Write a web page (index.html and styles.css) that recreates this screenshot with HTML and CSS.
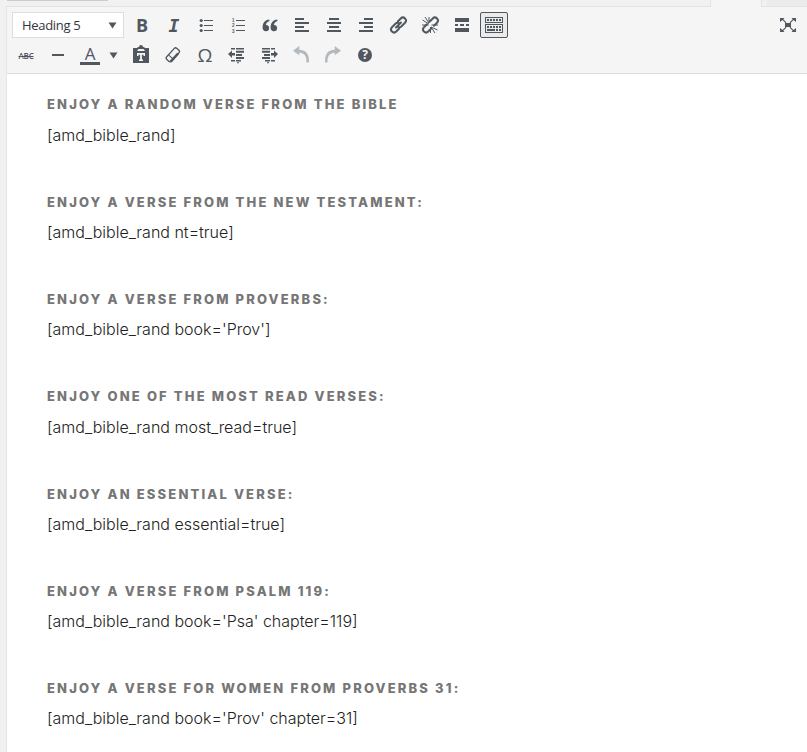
FILE: index.html
```html
<!DOCTYPE html>
<html lang="en">
<head>
<meta charset="utf-8">
<title>Editor</title>
<link rel="stylesheet" href="styles.css">
</head>
<body>
<div class="tabs"><div class="tabs-left"><i class="line"></i></div><div class="tab-active"></div><div class="tab-edge"></div><div class="tab-text"></div></div>
<main class="editor">
<div class="toolbar">
  <div class="row">
    <div class="select"><span>Heading 5</span><svg width="9" height="7" viewBox="0 0 9 7"><path d="M.5.5h8L4.500 6.500z"/></svg></div>
    <b class="btn bold">B</b>
    <b class="btn italic">I</b>
    <span class="btn"><svg viewBox="0 0 20 20"><circle cx="5.200" cy="5.500" r="1.600"/><circle cx="5.200" cy="10.500" r="1.600"/><circle cx="5.200" cy="15.500" r="1.600"/><path d="M8 5h9v1H8zM8 10h9v1H8zM8 15h9v1H8z"/></svg></span>
    <span class="btn"><svg viewBox="0 0 20 20"><g class="nums"><text x="4" y="7">1</text><text x="4" y="12.300">2</text><text x="4" y="17.600">3</text></g><path d="M8 5h9v1H8zM8 10h9v1H8zM8 15h9v1H8z"/></svg></span>
    <span class="btn"><svg viewBox="0 0 20 20"><path d="M9.200 4.500C5 5 2.600 8 2.600 12.500c0 2.300 1.200 3.700 3.200 3.700a3.200 3.200 0 0 0 3.300-3.200c0-1.900-1.300-3.100-3.200-3 .2-1.800 1.400-3.300 3.600-4zM17.200 4.500c-4.200.5-6.600 3.500-6.600 8 0 2.300 1.200 3.700 3.200 3.700a3.200 3.200 0 0 0 3.300-3.200c0-1.900-1.300-3.100-3.200-3 .2-1.800 1.400-3.300 3.600-4z"/></svg></span>
    <span class="btn"><svg viewBox="0 0 20 20"><path d="M3 3h9v2H3zM3 7h14v2H3zM3 11h9v2H3zM3 15h14v2H3z"/></svg></span>
    <span class="btn"><svg viewBox="0 0 20 20"><path d="M5 3h10v2H5zM3 7h14v2H3zM5 11h10v2H5zM3 15h14v2H3z"/></svg></span>
    <span class="btn"><svg viewBox="0 0 20 20"><path d="M8 3h9v2H8zM3 7h14v2H3zM8 11h9v2H8zM3 15h14v2H3z"/></svg></span>
    <span class="btn"><svg viewBox="0 0 20 20"><g class="chain" transform="translate(.5 0) rotate(-45 10 10)"><path d="M8 13H3.800a3 3 0 0 1 0-6H9a3 3 0 0 1 2.700 2M12 7h4.200a3 3 0 0 1 0 6H11a3 3 0 0 1-2.700-2"/><path d="M6.500 10h7"/></g></svg></span>
    <span class="btn"><svg viewBox="0 0 20 20"><g class="chain" transform="translate(.5 0) rotate(-45 10 10)"><path d="M8 13H3.800a3 3 0 0 1 0-6H8M12 7h4.200a3 3 0 0 1 0 6H12"/></g><path class="thin" d="M9 9 2.500 5M9 8 5 2M9 8V2M11 12l6.500 3M11 12l4 6M10.500 12v6M8.500 10H2M11.500 10H18"/></svg></span>
    <span class="btn"><svg viewBox="0 0 20 20"><path d="M3 3h14v4H3zM3 9h3v2H3zM8 9h4v2H8zM14 9h3v2h-3zM3 13h14v4H3z"/></svg></span>
    <span class="btn on"><svg viewBox="0 0 20 20"><path fill-rule="evenodd" d="M1 2h18v6H1zM2 3v4h16V3zM1 9h18v9H1zM2 10v7h16v-7z"/><path d="M3 4h2v2H3zM6 4h2v2H6zM9 4h2v2H9zM12 4h2v2h-2zM15 4h2v2h-2zM3 11h2v2H3zM6 11h2v2H6zM9 11h2v2H9zM12 11h2v2h-2zM15 11h2v2h-2zM3 14h8v2H3zM12 14h2v2h-2zM15 14h2v2h-2z"/></svg></span>
    <span class="btn full"><svg viewBox="0 0 20 20"><path d="M7 8h6v4H7zM2 3h4.500L5.300 4.300l3.200 3.200-.8.800-3.200-3.200L2 7zM18 3v4l-2.500-1.900-3.200 3.200-.8-.8 3.200-3.200L13.500 3zM2 17v-4l2.500 1.900 3.200-3.200.8.800-3.200 3.200L6.500 17zM18 17h-4.500l1.200-1.300-3.200-3.200.8-.8 3.200 3.200L18 13z"/></svg></span>
  </div>
  <div class="row">
    <span class="btn abc"><s>ABC</s></span>
    <span class="btn"><svg viewBox="0 0 20 20"><path d="M4 9h12v2H4z"/></svg></span>
    <span class="btn color"><span>A</span></span>
    <span class="drop"><svg width="9" height="7" viewBox="0 0 9 7"><path d="M.5.5h8L4.500 6.500z"/></svg></span>
    <span class="btn"><svg viewBox="0 0 20 20"><path fill-rule="evenodd" d="M2 3h4l1-1h1a2 2 0 0 1 4 0h1l1 1h4v15H2zM6 8v3h1.500V9.700h1.600v4.800H8V16h4v-1.500h-1.100V9.700h1.600V11H14V8zM6 6h8L12.500 4h-5z"/></svg></span>
    <span class="btn"><svg viewBox="0 0 20 20"><g transform="rotate(-48 10 10)"><rect class="outline" x="2.500" y="6.500" width="15" height="6.500" rx="2"/><path d="M3.500 11.500h11V14h-11zM6.500 7h1v6h-1z"/></g></svg></span>
    <span class="btn omega">Ω</span>
    <span class="btn"><svg viewBox="0 0 20 20"><path d="M4 3h4v1.500H4zM9 3h8v1.500H9zM9 5.800h8v2H9zM9 9h6v2H9zM9 12h8v2H9zM4 15h4v1.500H4zM9 15h5v1.500H9zM10 17.200h2v1h-2zM1 9l4-3.500V8h3v2.500H5V13z"/></svg></span>
    <span class="btn"><svg viewBox="0 0 20 20"><path d="M3 3h8v1.500H3zM12 3h4v1.500h-4zM3 5.800h8v2H3zM5 9h6v2H5zM3 12h8v2H3zM6 15h5v1.500H6zM12 15h4v1.500h-4zM8 17.200h2v1H8zM19 9l-4-3.500V8h-3v2.500h3V13z"/></svg></span>
    <span class="btn dim"><svg viewBox="0 0 20 20"><path d="M2 5.700 8.300 1v3.800c6 0 9.700 4 9.700 10.700l-.2 2h-2.400c.6-6.300-2.300-9.800-7.100-9.800v2.600z"/></svg></span>
    <span class="btn dim"><svg viewBox="0 0 20 20"><path d="m18 5.700-6.300-4.700v3.800C5.700 4.800 2 8.800 2 15.500l.2 2h2.400C4 11.200 6.900 7.700 11.700 7.700v2.600z"/></svg></span>
    <span class="btn"><i class="help">?</i></span>
  </div>
</div>
<div class="content">
  <section><h5>Enjoy a random verse from the Bible</h5><p>[amd_bible_rand]</p></section>
  <section><h5>Enjoy a verse from the New Testament:</h5><p>[amd_bible_rand nt=true]</p></section>
  <section><h5>Enjoy a verse from Proverbs:</h5><p>[amd_bible_rand book='Prov']</p></section>
  <section><h5>Enjoy one of the most read verses:</h5><p>[amd_bible_rand most_read=true]</p></section>
  <section><h5>Enjoy an essential verse:</h5><p>[amd_bible_rand essential=true]</p></section>
  <section><h5>Enjoy a verse from Psalm 119:</h5><p>[amd_bible_rand book='Psa' chapter=119]</p></section>
  <section><h5>Enjoy a verse for women from Proverbs 31:</h5><p>[amd_bible_rand book='Prov' chapter=31]</p></section>
</div>
</main>
</body>
</html>
```
FILE: styles.css
```css
* { box-sizing: border-box; }
body { margin: 0; height: 752px; overflow: hidden; background: #f1f1f1; font-family: "Open Sans", sans-serif; }
.tabs { display: flex; height: 7px; padding-left: 6px; }
.tabs-left { width: 705px; border: solid #e3e3e3; border-width: 0 1px 1px 0; }
.line { display: block; width: 101px; height: 1px; margin-left: 1px; background: #ccc; }
.tab-active { width: 50px; background: #f5f5f5; }
.tab-edge { width: 6px; border: solid #e3e3e3; border-width: 0 0 1px 1px; }
.tab-text { flex: 1; background: #ebebeb; border-bottom: 1px solid #e3e3e3; }
.editor { margin-left: 6px; height: 745px; border-left: 1px solid #e5e5e5; background: #fff; }
.toolbar { height: 67px; padding: 5px 5px 0; background: #f5f5f5; border-bottom: 1px solid #ddd; color: #50575e; }
.row { display: flex; gap: 4px; height: 26px; margin-bottom: 4px; }
.btn { display: flex; flex: none; align-items: center; justify-content: center; width: 28px; height: 26px; }
.btn svg { flex: none; width: 20px; height: 20px; }
svg { fill: #50575e; }
.select { display: flex; align-items: center; justify-content: space-between; width: 112px; padding: 0 6px 0 9px; border: 1px solid #ddd; background: #fff; font-size: 13px; letter-spacing: -.3px; color: #32373c; }
.bold { font-size: 18px; font-weight: 700; }
.italic { font: italic 700 18px "DejaVu Sans Mono", monospace; }
.nums { font: 700 5px "Liberation Sans", sans-serif; }
.nums text { font-size: 4.5px; }
.chain { fill: none; stroke: #50575e; stroke-width: 2; stroke-linecap: round; }
.thin { fill: none; stroke: #50575e; stroke-width: 1; }
.on { border: 1px solid #50575e; border-radius: 2px; background: #ebebeb; }
.full { margin-left: auto; }
.abc { font-size: 8px; font-weight: 600; letter-spacing: -.2px; }
.color span { width: 20px; height: 19px; border-bottom: 3px solid #50575e; text-align: center; font-size: 17px; line-height: 16px; }
.drop { display: flex; align-items: center; justify-content: center; width: 19px; margin: 0 0 0 -4px; }
.outline { fill: none; stroke: #50575e; stroke-width: 1.3; }
.omega { font-size: 19px; font-weight: 500; }
.dim svg { fill: #b4b9be; }
.help { width: 14px; height: 14px; border-radius: 50%; background: #50575e; color: #f5f5f5; font: 700 12px/14px "Open Sans", sans-serif; text-align: center; }
.content { padding: 20.4px 40px 0; font-family: Inter, sans-serif; }
section { height: 97.3px; }
h5 { margin: 0; height: 22px; font-size: 13px; font-weight: 800; line-height: 20px; letter-spacing: 2.15px; text-transform: uppercase; color: #767676; white-space: nowrap; }
p { margin: 6.3px 0 0; font-size: 16px; font-weight: 300; line-height: 24px; color: #222; white-space: nowrap; }
```
